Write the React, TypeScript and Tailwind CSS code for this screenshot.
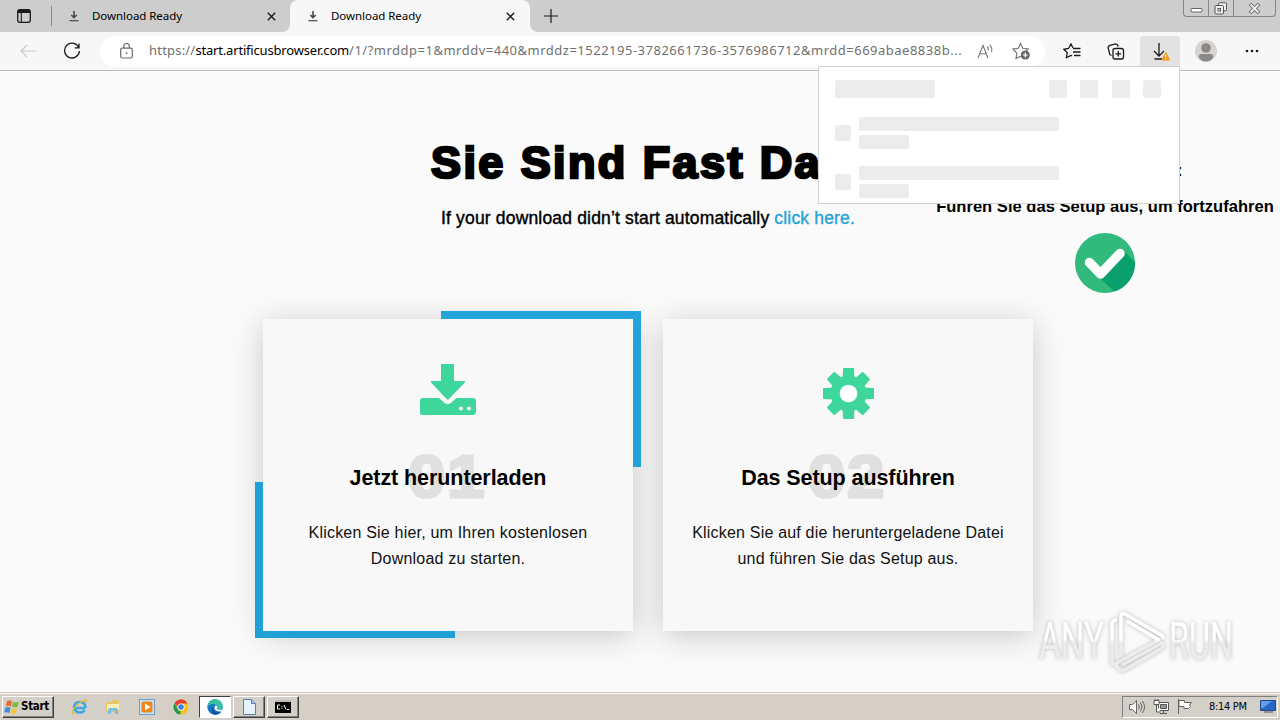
import { useState } from "react";

const toolIcon = "fill-none stroke-[#1b1b1b]";

function DownloadGlyph() {
    return (
        <svg className="fill-none stroke-[#4a4a4a]" width="12" height="12" viewBox="0 0 12 12">
            <path d="M6 1v6.5M3.3 5 6 7.7 8.7 5" strokeWidth="1.6" />
            <path d="M1.5 10.7h9" strokeWidth="1.2" />
        </svg>
    );
}

function CloseGlyph() {
    return (
        <svg className="fill-none stroke-[#1b1b1b]" width="9" height="9" viewBox="0 0 9 9">
            <path d="m.8.8 7.4 7.4M8.2.8.8 8.2" strokeWidth="1.4" />
        </svg>
    );
}

function TabBar() {
    return (
        <div className="flex h-8 shrink-0 bg-[#f7f7f7]">
            <div className="flex w-[51px] items-center bg-[#cdcdcd] pl-[17px]">
                <svg className={toolIcon} width="14" height="14" viewBox="0 0 14 14">
                    <rect x=".7" y=".7" width="12.6" height="12.6" rx="2" strokeWidth="1.3" />
                    <path d="M1 2.5h12" strokeWidth="3" />
                    <path d="M4.3 3v10" strokeWidth="1.1" />
                </svg>
            </div>
            <div className="w-px bg-[#cdcdcd] pt-1.5">
                <div className="h-5 bg-[#8b8b8b]" />
            </div>
            <div className="flex w-[238px] items-center rounded-br-lg bg-[#cdcdcd] pl-4 pr-[14px]">
                <DownloadGlyph />
                <span className="ml-[12px] flex-1 text-[11.5px] tracking-[-0.05px]">Download Ready</span>
                <CloseGlyph />
            </div>
            <div className="bg-[#cdcdcd] [clip-path:none]">
                <div className="flex h-full w-[240px] items-center rounded-t-lg bg-[#f7f7f7] pl-[17px] pr-[15px]">
                    <DownloadGlyph />
                    <span className="ml-[12px] flex-1 text-[11.5px] tracking-[-0.05px]">Download Ready</span>
                    <CloseGlyph />
                </div>
            </div>
            <div className="flex flex-1 items-center rounded-bl-lg bg-[#cdcdcd] pl-[14px]">
                <svg className={toolIcon} width="14" height="14" viewBox="0 0 14 14">
                    <path d="M7 0v14M0 7h14" strokeWidth="1.2" />
                </svg>
            </div>
            <div className="flex items-start bg-[#cdcdcd] pr-1">
                <div className="flex h-[17px] w-[93px] rounded-b border border-t-0 border-[#858585]">
                    <div className="flex w-[25px] items-center justify-center border-r border-[#858585]">
                        <svg className="fill-white stroke-[#666]" width="13" height="9" viewBox="0 0 13 9">
                            <rect x="1" y="4.5" width="11" height="3.5" rx="1" />
                        </svg>
                    </div>
                    <div className="flex w-[25px] items-center justify-center border-r border-[#858585]">
                        <svg className="fill-[#eee] stroke-[#555]" width="14" height="13" viewBox="0 0 14 13">
                            <rect x="4.5" y=".8" width="8" height="8" rx="1" />
                            <rect x="1" y="3.5" width="8.5" height="8.5" rx="1" />
                            <rect x="4" y="6.5" width="2.5" height="2.5" />
                        </svg>
                    </div>
                    <div className="flex flex-1 items-center justify-center">
                        <svg className="fill-none" width="13" height="11" viewBox="0 0 13 11">
                            <path d="m2 1 9 9M11 1l-9 9" stroke="#666" strokeWidth="3.6" />
                            <path d="m2.5 1.5 8 8M10.5 1.5l-8 8" stroke="#eee" strokeWidth="1.8" />
                        </svg>
                    </div>
                </div>
            </div>
        </div>
    );
}

function Toolbar() {
    return (
        <div className="flex h-[39px] shrink-0 items-center border-b border-[#bdbdbd] bg-[#f7f7f7]">
            <svg className="ml-5 fill-none stroke-[#c9c9c9]" width="16" height="14" viewBox="0 0 16 14">
                <path d="M16 7H1M7 1 1 7l6 6" strokeWidth="1.2" />
            </svg>
            <svg className="ml-[27px] fill-none stroke-[#1b1b1b]" width="18" height="18" viewBox="0 0 18 18">
                <path d="M15.8 5.6A7.4 7.4 0 1 0 16.4 9M16 1.5v4.3h-4.3" strokeWidth="1.3" />
            </svg>
            <div className="ml-[19px] flex h-[31px] w-[945px] items-center rounded-full bg-white">
                <svg className="ml-5 shrink-0 fill-none stroke-[#6b6b6b]" width="13" height="16" viewBox="0 0 13 16">
                    <rect x=".7" y="5.2" width="11.6" height="9.8" rx="1.5" strokeWidth="1.2" />
                    <path d="M3.7 5V3.3a2.8 2.8 0 0 1 5.6 0V5" strokeWidth="1.2" />
                    <circle cx="6.5" cy="10.2" r=".6" />
                </svg>
                <div className="ml-4 w-[820px] shrink-0 whitespace-nowrap text-[13px] text-[#707070]">
                    <span className="tracking-[0.2px]">https://</span>
                    <span className="tracking-[-0.18px] text-black">start.artificusbrowser.com</span>
                    <span className="tracking-[0.5px]">/1/?mrddp=1&amp;mrddv=440&amp;mrddz=1522195-3782661736-3576986712&amp;mrdd=669abae8838b...</span>
                </div>
                <svg className="ml-[8px] shrink-0 fill-none stroke-[#777]" width="17" height="15" viewBox="0 0 17 15">
                    <path d="M1 14 6 1.5 11 14M2.8 9.8h6.4M10.3 2.5q1.5 1.5 1 4M12.7.8q3 2.8 1.8 7" strokeWidth="1.1" />
                </svg>
                <svg className="ml-[18px] shrink-0 fill-none stroke-[#777]" width="19" height="18" viewBox="0 0 19 18">
                    <path d="m8.5 1.5 2.3 4.8 5.3.7-3.8 3.7-.7 4.7-3.1-.9-4.5 1.9.9-5.1L1 7l5.2-.7z" strokeWidth="1.2" />
                    <circle cx="13.3" cy="13" r="4.5" fill="#666" stroke="none" />
                    <path d="M13.3 10.6v4.8M10.9 13h4.8" stroke="#fff" strokeWidth="1.2" />
                </svg>
            </div>
            <svg className={`ml-[18px] ${toolIcon}`} width="18" height="16" viewBox="0 0 18 16">
                <path d="M10 5 8 1 5.5 5.5.8 6.3l3.4 3.3-.8 5L8 12.5l1 .5M10 5.5h7.500M10 9h7.5M11 12.5h6.5" strokeWidth="1.3" />
            </svg>
            <svg className={`ml-[26px] ${toolIcon}`} width="18" height="17" viewBox="0 0 18 17">
                <rect x="6" y="5.5" width="10.5" height="10.5" rx="2" strokeWidth="1.3" />
                <path d="M11.3 8v5.6M8.5 10.8h5.6M4.5 12.5l-1.7-1L1 4.3 2.3 2.600 8.5.9l2 .8.7 2" strokeWidth="1.3" />
            </svg>
            <div className="ml-[15px] flex h-[31px] w-10 items-center justify-center rounded bg-[#e2e2e2]">
                <svg className={toolIcon} width="20" height="19" viewBox="0 0 20 19">
                    <path d="M9 1v13M4 9l5 5 5-5M4.5 17h8" strokeWidth="1.3" />
                    <path d="m16 10.5 3.5 7.5h-7.5z" fill="#f29a18" stroke="#f29a18" />
                    <path d="M15.8 12.5v2.5M15.8 16v1" stroke="#fff" />
                </svg>
            </div>
            <svg className="ml-[15px]" width="22" height="22" viewBox="0 0 22 22">
                <circle cx="11" cy="11" r="11" fill="#d6d3d1" />
                <circle cx="11" cy="8" r="4.8" fill="#8a8886" />
                <path d="M3.7 17q0-3 3-3h8.6q3 0 3 3-2.5 4.5-7.3 4.5T3.7 17" fill="#8a8886" />
            </svg>
            <svg className="ml-[28px] fill-[#1b1b1b]" width="14" height="4" viewBox="0 0 14 4">
                <circle cx="2" cy="2" r="1.3" />
                <circle cx="7" cy="2" r="1.3" />
                <circle cx="12" cy="2" r="1.3" />
            </svg>
        </div>
    );
}

function DownloadsPopup() {
    return (
        <div className="absolute left-[818px] top-[66px] h-[138px] w-[362px] border border-[#d2d2d2] bg-white px-4 pt-[13px]">
            <div className="flex h-[18px] justify-between pr-0.5">
                <div className="w-[100px] rounded-xs bg-[#ececec]" />
                <div className="flex gap-[13.3px]">
                    {[0, 1, 2, 3].map((n) => (
                        <div key={n} className="w-[18px] rounded-xs bg-[#ececec]" />
                    ))}
                </div>
            </div>
            <div className="flex flex-col gap-[17px] pt-[19px]">
                {[0, 1].map((n) => (
                    <div key={n} className="flex h-8 items-center gap-2">
                        <div className="size-4 rounded-xs bg-[#ececec]" />
                        <div className="flex flex-col gap-1">
                            <div className="h-[14px] w-[200px] rounded-xs bg-[#ececec]" />
                            <div className="h-[14px] w-[50px] rounded-xs bg-[#ececec]" />
                        </div>
                    </div>
                ))}
            </div>
        </div>
    );
}

function TrayIcon() {
    return (
        <svg className="mb-2 fill-[#3fd69c]" width="56" height="51" viewBox="0 0 56 51">
            <path d="M22 0h11q1 0 1 1v16h10q2 0 .8 1.5L29 35q-1.2 1-2.4 0L11 18.5q-1-1.5 1-1.5h9V1q0-1 1-1" />
            <path d="M2.5 34H19l5.5 5q3.2 2.3 6.4 0l5.5-5h16.2q3.4 0 3.4 3.4v10.2q0 3.4-3.4 3.4H2.5Q0 51 0 48.5v-12Q0 34 2.5 34" />
            <circle cx="41" cy="44.5" r="2.1" fill="#f8f8f8" />
            <circle cx="49" cy="44.5" r="2.1" fill="#f8f8f8" />
        </svg>
    );
}

function GearIcon() {
    return (
        <svg className="fill-[#3fd69c]" width="52" height="52" viewBox="-26.5 -26.5 52 52">
            {[0, 45, 90, 135, 180, 225, 270, 315].map((deg) => (
                <path key={deg} d="M-5.5-24.5q0-1 1-1h9q1 0 1 1L6-14H-6z" transform={`rotate(${deg})`} />
            ))}
            <circle r="18" />
            <circle r="8.8" fill="#fff" />
        </svg>
    );
}

function StepCard({ number, title, lines, icon, active }: { number: string; title: string; lines: string[]; icon: React.ReactNode; active?: boolean }) {
    return (
        <div className="relative h-[312px] w-[370px]">
            <div className="absolute inset-0 shadow-[0_5px_30px_rgba(0,0,0,0.2)]" />
            {active && (
                <>
                    <div className="absolute -right-2 -top-2 h-[156px] w-[200px] bg-[#24a4da]" />
                    <div className="absolute -bottom-[7px] -left-2 h-[156px] w-[200px] bg-[#219fd7]" />
                </>
            )}
            <div className="relative flex h-full flex-col items-center bg-[#f8f8f8] pt-[45px] text-center">
                <div className="flex h-[58px] items-center">{icon}</div>
                <div className="relative mt-[41px] flex h-[30px] w-full items-center justify-center">
                    <span className="absolute left-[145px] top-[-21px] origin-left scale-x-[1.12] text-[60px] font-bold leading-[70px] tracking-[1.5px] text-[#e0e0e0] [-webkit-text-stroke:3px_#e0e0e0]">{number}</span>
                    <h3 className="relative whitespace-nowrap text-[21.5px] font-bold tracking-[-0.08px]">{title}</h3>
                </div>
                <p className="mt-[27px] whitespace-nowrap text-base leading-[26px] tracking-[0.2px] text-[#111]">
                    {lines[0]}<br />{lines[1]}
                </p>
            </div>
        </div>
    );
}

function Watermark() {
    return (
        <svg className="absolute left-[1030px] top-[532px] drop-shadow-[0_0_2px_rgba(0,0,0,0.25)]" width="245" height="80" viewBox="0 0 245 80">
            <defs>
                <linearGradient id="shine" gradientUnits="userSpaceOnUse" x1="0" y1="0" x2="0" y2="76">
                    <stop offset="0.48" stopColor="#ffffff" />
                    <stop offset="0.52" stopColor="#ececec" />
                </linearGradient>
            </defs>
            <g className="font-[Roboto] text-[51px]" fill="url(#shine)">
                <text x="9" y="56" textLength="65" lengthAdjust="spacingAndGlyphs">ANY</text>
                <text x="139" y="56" textLength="64" lengthAdjust="spacingAndGlyphs">RUN</text>
            </g>
            <g fill="none" stroke="url(#shine)" strokeWidth="3.5" strokeLinejoin="round">
                <path d="M91 54V13q0-4 4-2l36 21q3 2 1 4" />
                <path d="M87 17q-5 0-5 4v38q0 3 3 2l44-24L97 18" />
                <path d="M85 62l6 5q3 1 5-1l36-21q3-2 0-5L92 62" />
            </g>
        </svg>
    );
}

function LandingPage() {
    const [done, setDone] = useState<boolean>(false);

    return (
        <div className="relative flex-1 overflow-hidden bg-[#fafafa] font-['Liberation_Sans',Arial,sans-serif] text-black">
            <div className="ml-[431px] pt-[62px]">
                <h1 className="whitespace-nowrap text-[45px] font-bold leading-[60px] tracking-[2.4px] [-webkit-text-stroke:2.6px_black]">Sie Sind Fast Da!</h1>
                <p className="ml-[10px] mt-[14px] whitespace-nowrap text-[17.5px] leading-[22px] tracking-[0.17px] [-webkit-text-stroke:0.4px_currentColor]">
                    If your download didn’t start automatically{" "}
                    <a className="cursor-pointer text-[#2aa5d6]" onClick={() => setDone(!done)}>click here.</a>
                </p>
            </div>
            <div className="ml-[263px] mt-[90px] flex gap-[30px]">
                <StepCard active number="01" title="Jetzt herunterladen" icon={<TrayIcon />}
                    lines={["Klicken Sie hier, um Ihren kostenlosen", "Download zu starten."]} />
                <StepCard number="02" title="Das Setup ausführen" icon={<GearIcon />}
                    lines={["Klicken Sie auf die heruntergeladene Datei", "und führen Sie das Setup aus."]} />
            </div>
            <div className="absolute left-[930px] top-[87px] flex w-[350px] flex-col items-center text-[16.5px] font-bold tracking-[0.03px]">
                <span className="w-full pl-[247px] leading-6">:</span>
                <p className="mt-3 whitespace-nowrap leading-6">Führen Sie das Setup aus, um fortzufahren</p>
                <svg className="mt-[15px]" width="60" height="60" viewBox="0 0 60 60">
                    <circle cx="30" cy="30" r="30" fill="#32ba7c" />
                    <path d="m26 46 13 12.6A30 30 0 0 0 60 31v-2L48 17z" fill="#0aa06e" />
                    <path d="m14.5 29.5 11 11.5 19.5-20.5" fill="none" stroke="#fff" strokeWidth="9.5" strokeLinecap="round" strokeLinejoin="round" />
                </svg>
            </div>
            <Watermark />
        </div>
    );
}

const raised = "border border-white border-b-[#404040] border-r-[#404040] shadow-[inset_-1px_-1px_0_#808080]";

function Taskbar() {
    return (
        <div className="flex h-[28px] shrink-0 items-center border-t border-[#c9c5be] bg-[#d4d0c8] font-[Tahoma,'DejaVu_Sans_Condensed','DejaVu_Sans',sans-serif] shadow-[inset_0_1px_0_#fff]">
            <div className={`ml-0.5 flex h-[22px] w-[52px] items-center gap-0.5 pl-px ${raised}`}>
                <svg width="16" height="16" viewBox="0 0 16 16">
                    <path d="M3 2q3-1.5 5 .3L7 7.5Q4.5 6 1.7 7.3z" fill="#ee6a31" />
                    <path d="M9 2.7q3 1.5 6 0l-1.4 5q-3 1.5-5.6.1z" fill="#7dbb42" />
                    <path d="M1.4 8.5q2.7-1.2 5.2.3L5.5 14Q3 12.5 0 13.6z" fill="#3c8fdd" />
                    <path d="M7.7 9.2q3 1.4 5.6 0l-1.5 5q-2.6 1.3-5.3.1z" fill="#f8c534" />
                </svg>
                <span className="-ml-px pt-px text-[11.5px] font-bold tracking-[-0.3px]">Start</span>
            </div>
            <svg className="ml-[17px]" width="17" height="16" viewBox="0 0 17 16">
                <path d="M14.5 9H3.5Q4 13.5 9 13.5q3 0 4.500-2.5M14.5 9Q14.5 3 8.8 3T3 9" fill="none" stroke="#3ca8e6" strokeWidth="2.5" />
                <path d="M14 4q3-3.5.5-3.2Q7 3 2 11q-2 4.5 2 3" fill="none" stroke="#e8b93a" strokeWidth="1.3" />
            </svg>
            <svg className="ml-[17px]" width="16" height="16" viewBox="0 0 16 16">
                <path d="M1 3h6l1-2h6v12H1z" fill="#e9c767" />
                <path d="M2 5h12v6H2z" fill="#faeeb4" />
                <path d="M3 15v-4q0-2 2-2h6q2 0 2 2v4h-3v-3H6v3z" fill="#7fbde6" />
            </svg>
            <svg className="ml-[18px]" width="16" height="16" viewBox="0 0 16 16">
                <rect x=".5" y=".5" width="15" height="15" fill="#c9e2f5" stroke="#6e9fc6" />
                <rect x="2.5" y="2.5" width="11" height="11" rx="2" fill="#f08519" />
                <path d="M6 4.5 11.5 8 6 11.5z" fill="#fff" />
            </svg>
            <svg className="ml-[18px]" width="16" height="16" viewBox="0 0 16 16">
                <circle cx="8" cy="8" r="7.5" fill="#fbc116" />
                <path d="M1.5 4.2A7.5 7.5 0 0 1 14.7 4.6H8v7z" fill="#e33b2e" />
                <path d="M1.5 4.2 6 12l2 .3-1 3.2A7.5 7.5 0 0 1 1.5 4.2" fill="#229b4c" />
                <circle cx="8" cy="8" r="3.6" fill="#fff" />
                <circle cx="8" cy="8" r="2.8" fill="#3b7fe8" />
            </svg>
            <div className="ml-[10px] flex h-[22px] w-8 items-center justify-center border border-[#404040] border-b-white border-r-white bg-white">
                <svg width="16" height="16" viewBox="0 0 16 16">
                    <circle cx="8" cy="8" r="7.7" fill="#1878c8" />
                    <path d="M.4 8Q1 1 8 .3q7 .4 7.7 6.5.3 4.2-5 4-2-.3-1-2Q10 5 6 5 2 5 .4 8" fill="#39c1a0" />
                    <path d="M7 6.5q-2.5 6 4 7 2 .2 3.5-.7-3 3.8-7.5 2.7Q2 12 7 6.5" fill="#134f9c" />
                    <path d="M8.5 6.5q2.5.5 1.2 3 .3 1.8 5.5 1l-1 1.8Q7 13 7.5 8z" fill="#fff" />
                </svg>
            </div>
            <div className={`ml-[2px] flex h-[22px] w-8 items-center justify-center ${raised}`}>
                <svg width="13" height="16" viewBox="0 0 13 16">
                    <path d="M.5.5h8l4 4v11H.5z" fill="#e8f2fe" stroke="#5a7fae" />
                    <path d="M8.5.5v4h4" fill="#a9c9ee" stroke="#5a7fae" />
                </svg>
            </div>
            <div className={`ml-[2px] flex h-[22px] w-8 items-center justify-center ${raised}`}>
                <svg width="16" height="13" viewBox="0 0 16 13">
                    <path d="M0 0h16v13H0z" fill="#000" />
                    <path d="M0 1h16" stroke="#bbb" strokeWidth="2" />
                    <path d="M5 5H2.5v4H5M7 6v.9M7 8v1M9 5l2 4.5M12 9.5h2" fill="none" stroke="#fff" />
                </svg>
            </div>
            <div className="ml-auto mr-[2px] flex h-[22px] w-[156px] items-center border border-[#808080] border-b-white border-r-white pl-[6px]">
                <svg className="fill-white stroke-[#666]" width="16" height="14" viewBox="0 0 16 14">
                    <path d="M.5 4.5h3l4-4v13l-4-4h-3z" />
                    <path d="M9.5 4.5q1.5 2.5 0 5M11.5 2.5q3 4.5 0 9M13.5 1q4 6 0 12" fill="none" />
                </svg>
                <svg className="ml-[8px] fill-white stroke-[#555]" width="16" height="16" viewBox="0 0 16 16">
                    <path d="M5.5 3.5h10v8h-10zM7 14.5h7M10.5 12v2" />
                    <path d="M7.5 5.5h6v4h-6z" fill="#999" />
                    <path d="M1 1.5h5v4H1zM3.5 6v7h4M2 0v2M5 0v2" />
                </svg>
                <svg className="ml-[8px] fill-white stroke-[#666]" width="16" height="15" viewBox="0 0 16 15">
                    <path d="M1.5 0v15M2 1.5h5.5v2h7l-2 2.5 1 1.5-2 2H7V7.5H2z" />
                </svg>
                <span className="ml-[16px] w-[44px] whitespace-nowrap pt-[2px] text-[11px] tracking-[-0.3px]">8:14 PM</span>
                <svg className="ml-[7px]" width="16" height="13" viewBox="0 0 16 13">
                    <path d="M.5.5h15v10H.5z" fill="#2866c5" stroke="#234a86" />
                    <path d="M1 1h11L3 8H1z" fill="#609fe6" />
                    <path d="M4 12h9" stroke="#555" />
                </svg>
            </div>
        </div>
    );
}

export default function App() {
    return (
        <div className="relative flex h-[720px] w-[1280px] flex-col overflow-hidden bg-[#fafafa] font-['Noto_Sans','Open_Sans',sans-serif] text-black">
            <TabBar />
            <Toolbar />
            <LandingPage />
            <Taskbar />
            <DownloadsPopup />
        </div>
    );
}
